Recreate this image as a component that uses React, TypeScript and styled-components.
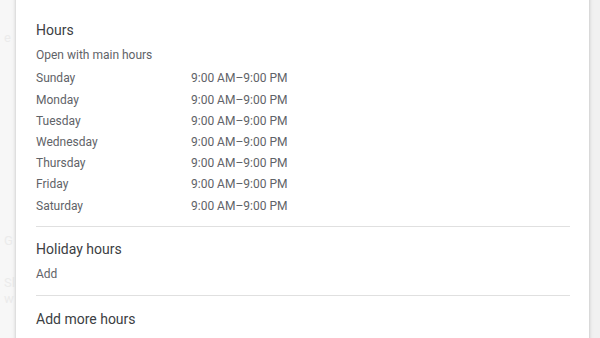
import styled, { createGlobalStyle } from "styled-components";

const GlobalStyle = createGlobalStyle`
  html, body {
    margin: 0;
    padding: 0;
    background: #f4f4f4;
    font-family: Roboto, "Liberation Sans", Arial, sans-serif;
    overflow: hidden;
  }
`;

const hours = [
  ["Sunday", "9:00 AM–9:00 PM"],
  ["Monday", "9:00 AM–9:00 PM"],
  ["Tuesday", "9:00 AM–9:00 PM"],
  ["Wednesday", "9:00 AM–9:00 PM"],
  ["Thursday", "9:00 AM–9:00 PM"],
  ["Friday", "9:00 AM–9:00 PM"],
  ["Saturday", "9:00 AM–9:00 PM"],
];

const App = () => {
  return (
    <StyledPage>
      <GlobalStyle />
      <StyledBackdrop>
        <StyledGhost $top={30}>e</StyledGhost>
        <StyledGhost $top={233}>G</StyledGhost>
        <StyledGhost $top={275}>Sl</StyledGhost>
        <StyledGhost $top={291}>w</StyledGhost>
      </StyledBackdrop>
      <StyledCard>
        <StyledSection>
          <StyledTitle>Hours</StyledTitle>
          <StyledSubtitle $gap={5}>Open with main hours</StyledSubtitle>
          <StyledTable>
            {hours.map(([day, time]) => (
              <StyledRow key={day}>
                <span>{day}</span>
                <span>{time}</span>
              </StyledRow>
            ))}
          </StyledTable>
        </StyledSection>
        <StyledDivider $top={9} />
        <StyledSection $top={12}>
          <StyledTitle>Holiday hours</StyledTitle>
          <StyledSubtitle $gap={5}>Add</StyledSubtitle>
        </StyledSection>
        <StyledDivider $top={11} />
        <StyledSection $top={13}>
          <StyledTitle>Add more hours</StyledTitle>
        </StyledSection>
      </StyledCard>
    </StyledPage>
  );
};

export default App;

const StyledPage = styled.div`
  position: relative;
  width: 600px;
  height: 338px;
  overflow: hidden;
  background: linear-gradient(to right, #f7f7f7 0, #f7f7f7 16px, #f1f1f1 590px);
`;

const StyledBackdrop = styled.div`
  position: absolute;
  inset: 0;
  color: #ebebeb;
  font-size: 13px;
  line-height: 16px;
`;

const StyledGhost = styled.span<{ $top: number }>`
  position: absolute;
  left: 4px;
  top: ${(p) => p.$top}px;
`;

const StyledCard = styled.div`
  position: relative;
  margin: -8px 0 0 16px;
  width: 573px;
  height: 360px;
  box-sizing: border-box;
  padding: 28px 19px 0 20px;
  background: #ffffff;
  box-shadow: 0 0 3px rgba(0, 0, 0, 0.18), 0 1px 6px rgba(0, 0, 0, 0.08);
`;

const StyledSection = styled.div<{ $top?: number }>`
  display: flex;
  flex-direction: column;
  margin-top: ${(p) => p.$top ?? 0}px;
`;

const StyledTitle = styled.div`
  font-size: 14px;
  line-height: 20px;
  color: #3c4043;
`;

const StyledSubtitle = styled.div<{ $gap?: number }>`
  margin-top: ${(p) => p.$gap ?? 3}px;
  font-size: 12px;
  line-height: 20px;
  color: #5f6368;
`;

const StyledTable = styled.div`
  display: flex;
  flex-direction: column;
  margin-top: 3.4px;
`;

const StyledRow = styled.div`
  display: grid;
  grid-template-columns: 155px auto;
  font-size: 12px;
  line-height: 21.2px;
  color: #5f6368;
`;

const StyledDivider = styled.div<{ $top?: number }>`
  height: 1px;
  margin-top: ${(p) => p.$top ?? 11.4}px;
  background: #e0e0e0;
`;
